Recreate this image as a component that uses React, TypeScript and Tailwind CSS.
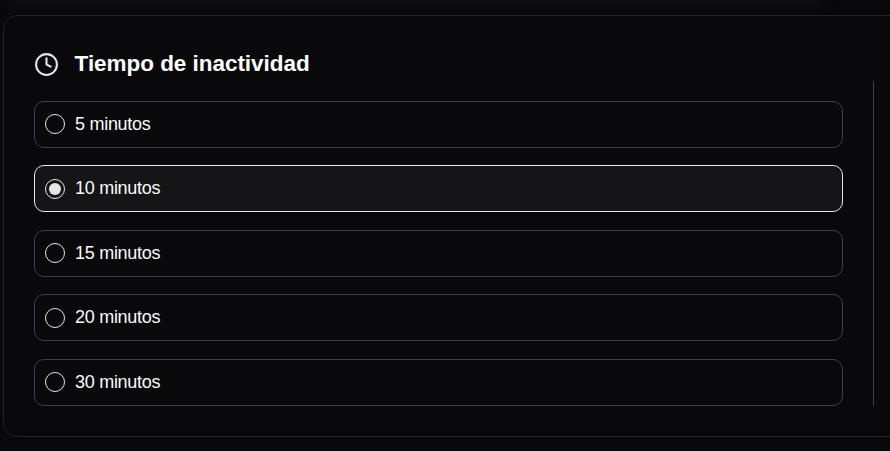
import React from "react";
import { Clock } from "lucide-react";

const options = [5, 10, 15, 20, 30];

function Option({ minutes, selected }: { minutes: number; selected: boolean }) {
  return (
    <div
      className={
        "flex h-[47px] items-start gap-[10px] rounded-[10px] border pl-[10px] " +
        (selected ? "border-[#e8e8ea] bg-[#151517]" : "border-gray-700")
      }
    >
      <span className="mt-[12.45px] flex size-5 shrink-0 items-center justify-center rounded-full border border-[#e5e5e5]">
        {selected && <span className="size-[12px] rounded-full bg-[#e5e5e5]" />}
      </span>
      <span className="mt-[9px] text-[18px] leading-[27px] tracking-[-0.28px] text-[#fafafa]">
        {minutes} minutos
      </span>
    </div>
  );
}

export default function App() {
  return (
    <div className="h-[451px] w-[890px] overflow-hidden bg-[#09090b] font-['Liberation_Sans',Arial,sans-serif]">
      <div className="ml-[16px] h-0 w-[800px] shadow-[0_-2px_16px_6px_#131315]" />
      <section className="mt-[15px] ml-[3px] flex h-[422px] w-[920px] rounded-[14px] border border-[#232326] bg-[#09090b] pt-[32px] pl-[30px]">
        <div className="w-[809px]">
          <h2 className="flex h-[30px] items-center gap-[15.6px] text-[22.5px] font-bold tracking-[-0.04px] text-white">
            <Clock className="mt-[3px] size-[25px] text-[#e5e5e5]" strokeWidth={2} />
            <span className="pt-[2px]">Tiempo de inactividad</span>
          </h2>
          <div className="mt-[23px] flex flex-col gap-[17.4px]">
            {options.map((m) => (
              <Option key={m} minutes={m} selected={m === 10} />
            ))}
          </div>
        </div>
        <div className="mt-[33px] ml-[30px] h-[325px] w-px bg-gray-700" />
      </section>
    </div>
  );
}
